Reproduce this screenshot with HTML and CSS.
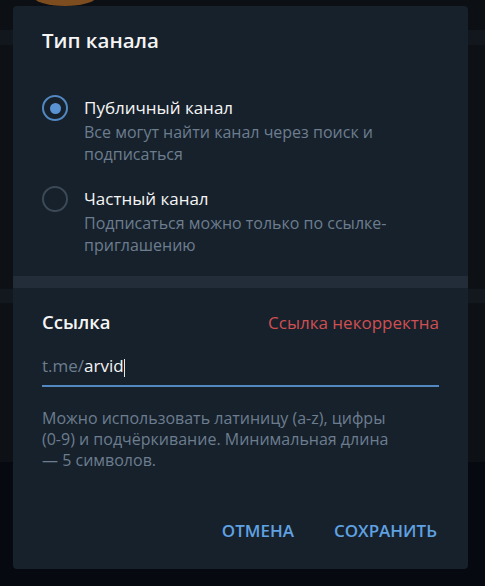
FILE: index.html
```html
<!DOCTYPE html>
<html lang="ru">
<head>
  <meta charset="UTF-8">
  <title>Тип канала</title>
  <meta name="viewport" content="width=device-width, initial-scale=1.0">
  <link rel="stylesheet" href="styles.css">
</head>
<body>

  <div class="avatar"></div>

  <div class="dialog">
    <div class="section">
      <h2 class="title">Тип канала</h2>

      <div class="options">
        <label class="option">
          <span class="radio checked"></span>
          <span class="option-text">
            <span class="option-name">Публичный канал</span>
            <span class="option-desc">Все могут найти канал через поиск и<br>подписаться</span>
          </span>
        </label>

        <label class="option">
          <span class="radio"></span>
          <span class="option-text">
            <span class="option-name">Частный канал</span>
            <span class="option-desc">Подписаться можно только по ссылке-<br>приглашению</span>
          </span>
        </label>
      </div>
    </div>

    <div class="divider"></div>

    <div class="section link-section">
      <div class="link-head">
        <h3 class="subtitle">Ссылка</h3>
        <span class="error">Ссылка некорректна</span>
      </div>

      <div class="field">
        <span class="prefix">t.me/</span><span class="value">arvid</span><span class="caret"></span>
      </div>

      <p class="hint">Можно использовать латиницу (a-z), цифры<br>(0-9) и подчёркивание. Минимальная длина<br>— 5 символов.</p>
    </div>

    <div class="buttons">
      <button>Отмена</button>
      <button>Сохранить</button>
    </div>
  </div>

</body>
</html>
```

FILE: styles.css
```css
/* Dimmed app behind the dialog */
body {
  margin: 0;
  height: 586px;
  overflow: hidden;
  position: relative;
  font-family: 'Open Sans', 'Noto Sans', sans-serif;
  background: linear-gradient(to bottom,
    #0c1015 0, #0c1015 30px,
    #12171d 30px, #12171d 45px,
    #0d1116 45px, #0d1116 289px,
    #13181e 289px, #13181e 303px,
    #0d1116 303px, #0d1116 462px,
    #060910 462px);
  color: #f5f5f5;
}

.avatar {
  position: absolute;
  top: -14px;
  left: 33px;
  width: 64px;
  height: 20px;
  border-radius: 50%;
  background: #7d4c1f;
}

/* Dialog box */
.dialog {
  position: relative;
  margin: 6px 0 0 13px;
  width: 455px;
  height: 563px;
  background: #17212b;
  border-radius: 4px;
  display: flex;
  flex-direction: column;
}

.section {
  padding: 21px 29px 20px 29px;
}

.title {
  margin: 0;
  font-size: 20.5px;
  font-weight: 600;
  line-height: 26px;
}

.options {
  margin-top: 44px;
  display: flex;
  flex-direction: column;
  gap: 22.5px;
}

.option {
  display: flex;
  gap: 16px;
}

.radio {
  flex: none;
  width: 22px;
  height: 22px;
  margin-top: -2px;
  border: 2px solid #3c4957;
  border-radius: 50%;
  display: flex;
  align-items: center;
  justify-content: center;
}

.radio.checked {
  border-color: #5288c1;
}

.radio.checked::after {
  content: "";
  width: 11px;
  height: 11px;
  border-radius: 50%;
  background: #5a93d3;
}

.option-text {
  display: flex;
  flex-direction: column;
}

.option-name {
  font-size: 17px;
  line-height: 22px;
}

.option-desc {
  margin-top: 3px;
  font-size: 16px;
  line-height: 21.7px;
  color: #6c7d8f;
}

.divider {
  height: 12px;
  background: #222d39;
}

.link-section {
  padding-top: 21px;
}

.link-head {
  display: flex;
  justify-content: space-between;
  align-items: baseline;
}

.subtitle {
  margin: 0;
  font-size: 18.5px;
  font-weight: 600;
  line-height: 26px;
}

.error {
  font-size: 17px;
  color: #d04f52;
}

.field {
  margin-top: 20px;
  padding-bottom: 8px;
  border-bottom: 2px solid #5288c1;
  font-size: 17px;
  line-height: 22px;
  display: flex;
  align-items: center;
}

.prefix {
  color: #6c7d8f;
}

.caret {
  width: 1px;
  height: 18px;
  margin-top: 4px;
  background: #e6e6e6;
}

.hint {
  margin: 20.5px 0 0;
  font-size: 16px;
  line-height: 21.3px;
  color: #6c7d8f;
}

.buttons {
  margin-top: auto;
  display: flex;
  justify-content: flex-end;
  gap: 40px;
  padding: 0 31px 27px 0;
}

button {
  padding: 0;
  border: none;
  background: none;
  font-family: inherit;
  font-size: 17px;
  font-weight: 600;
  line-height: 22px;
  text-transform: uppercase;
  color: #5fa1e2;
  cursor: pointer;
}
```
